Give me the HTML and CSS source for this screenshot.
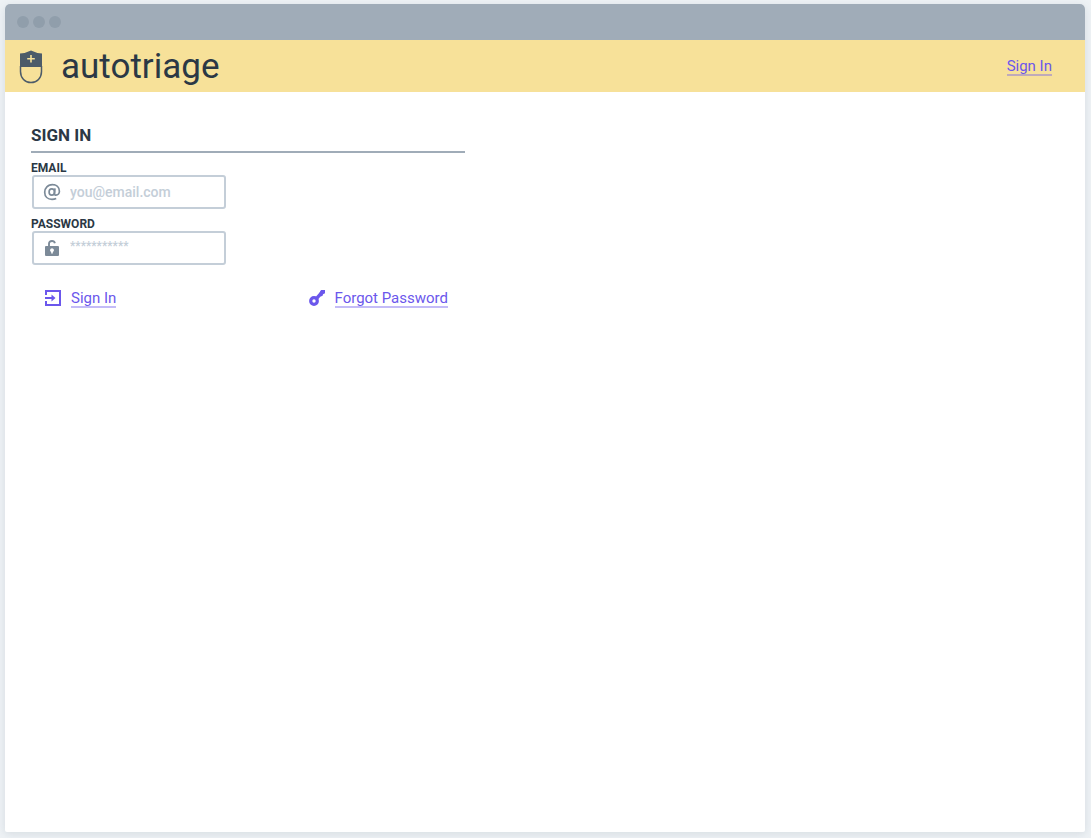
FILE: index.html
```html
<!DOCTYPE html>
<html lang="en">
<head>
<meta charset="utf-8">
<meta name="viewport" content="width=device-width, initial-scale=1">
<title>autotriage</title>
<link rel="stylesheet" href="styles.css">
</head>
<body>
<div class="window">
  <div class="titlebar"><span class="dot"></span><span class="dot"></span><span class="dot"></span></div>
  <header class="header">
    <svg class="logo" viewBox="0 0 24 34" aria-hidden="true">
      <path d="M1 3.6 Q7 3.2 12 .6 Q17 3.2 23 3.6 V17 H1Z" fill="#4c5b69"/>
      <path d="M1.5 16 V21.5 C1.5 28 6 32.6 12 32.6 S22.5 28 22.5 21.5 V16" fill="none" stroke="#4c5b69" stroke-width="1.5"/>
      <path d="M12 5v7.4M8.2 8.7h7.6" stroke="#f7e199" stroke-width="1.6"/>
    </svg>
    <span class="brand">autotriage</span>
    <nav class="nav"><a class="link" href="#signin">Sign In</a></nav>
  </header>
  <main class="content">
    <form class="form" id="signin">
      <h1 class="title">SIGN IN</h1>
      <label class="label" for="email">EMAIL</label>
      <div class="field">
        <svg class="icon" viewBox="0 0 16 16" aria-hidden="true">
          <g fill="none" stroke="#7c8a98" stroke-width="1.7">
            <ellipse cx="7.8" cy="8" rx="2.7" ry="3.2"/>
            <path d="M11 4.4 L10.5 9 Q10.4 11.2 12 11.2 C14 11.2 15.4 9.4 15.4 7.3 C15.4 3.3 12.4 .6 8.4 .6 C3.9 .6 .7 4 .7 8.2 C.7 12.7 3.8 15.4 8 15.4 Q10.3 15.4 12.2 14.5"/>
          </g>
        </svg>
        <input class="input" id="email" type="email" placeholder="you@email.com">
      </div>
      <label class="label" for="password">PASSWORD</label>
      <div class="field">
        <svg class="icon" viewBox="0 0 16 16" aria-hidden="true">
          <path d="M5 7 V3.7 Q5 1 8 1 Q10.4 1 10.9 3.2" fill="none" stroke="#7c8a98" stroke-width="1.9"/>
          <path fill-rule="evenodd" fill="#7c8a98" d="M2 6 H14 Q15 6 15 7 V15 Q15 16 14 16 H2 Q1 16 1 15 V7 Q1 6 2 6Z M8 8.2 A2 2 0 0 0 7.2 12 V13.4 H8.8 V12 A2 2 0 0 0 8 8.2Z"/>
        </svg>
        <input class="input input-password" id="password" type="password" placeholder="***********">
      </div>
      <div class="actions">
        <a class="action" href="#signin">
          <svg class="icon" viewBox="0 0 16 16" aria-hidden="true">
            <path d="M1 5 V1 H15 V15 H1 V11 M0 8 H9" fill="none" stroke="#6b57ec" stroke-width="2"/>
            <path d="M6.5 4.5 L10.5 8 L6.5 11.5Z" fill="#6b57ec"/>
          </svg>
          <span class="link">Sign In</span>
        </a>
        <a class="action" href="#forgot">
          <svg class="icon" viewBox="0 0 16 16" aria-hidden="true">
            <circle cx="5" cy="11" r="3.3" fill="none" stroke="#6b57ec" stroke-width="3.2"/>
            <path d="M7.2 8.8 L13.2 2.2" fill="none" stroke="#6b57ec" stroke-width="3.4"/>
            <path d="M12 0 H16 V3.2 L14 4.2 L13.6 5.8 L11.8 6.6 L9.6 4.6Z" fill="#6b57ec"/>
          </svg>
          <span class="link">Forgot Password</span>
        </a>
      </div>
    </form>
  </main>
</div>
</body>
</html>
```
FILE: styles.css
```css
* { box-sizing: border-box; }
body {
  margin: 0;
  padding: 4px 6px 6px 5px;
  min-height: 100vh;
  display: flex;
  background: #eef2f5;
  color: #2b3845;
  font-family: Roboto, "Liberation Sans", sans-serif;
}
.window {
  flex: 1;
  background: #fff;
  border-radius: 5px 5px 2px 2px;
  overflow: hidden;
  box-shadow: 0 2px 8px rgba(70, 90, 110, .14);
}
.titlebar {
  height: 36px;
  padding: 0 12px;
  display: flex;
  align-items: center;
  gap: 4px;
  background: #a0acb8;
}
.dot { width: 12px; height: 12px; border-radius: 50%; background: #909eab; }
.header {
  height: 52px;
  padding: 2px 33px 0 14px;
  display: flex;
  align-items: center;
  background: #f7e199;
}
.logo { width: 24px; height: 34px; }
.brand { margin-left: 18px; font-size: 35px; line-height: 50px; }
.nav { margin-left: auto; display: flex; }
.link {
  padding-top: 2px;
  color: #6b57ec;
  font-size: 15px;
  line-height: 16px;
  text-decoration: none;
  border-bottom: 2px solid rgba(107, 87, 236, .4);
}
.nav .link { padding-top: 0; }
.content { padding: 32px 26px; }
.form { max-width: 434px; }
.title {
  margin: 0 0 8px;
  padding-bottom: 5px;
  border-bottom: 2px solid #a0acb8;
  font-size: 17px;
  line-height: 22px;
  font-weight: 700;
}
.label { display: block; font-size: 12px; line-height: 14px; font-weight: 700; }
.field {
  width: 194px;
  height: 34px;
  margin: 0 1px 8px;
  padding: 0 10px;
  display: flex;
  align-items: center;
  gap: 10px;
  border: 2px solid #c4ced8;
  border-radius: 3px;
}
.icon { width: 16px; height: 16px; flex: none; overflow: visible; }
.input {
  flex: 1;
  min-width: 0;
  height: 30px;
  padding: 0;
  border: 0;
  outline: 0;
  background: transparent;
  color: #2b3845;
  font: 500 14px/20px Roboto, "Liberation Sans", sans-serif;
}
.input::placeholder { color: #c4ced8; opacity: 1; }
.input-password { padding-bottom: 4px; font-size: 12px; }
.actions { padding: 15px 17px 0 14px; display: flex; justify-content: space-between; }
.action { display: flex; align-items: center; gap: 10px; text-decoration: none; }
```
